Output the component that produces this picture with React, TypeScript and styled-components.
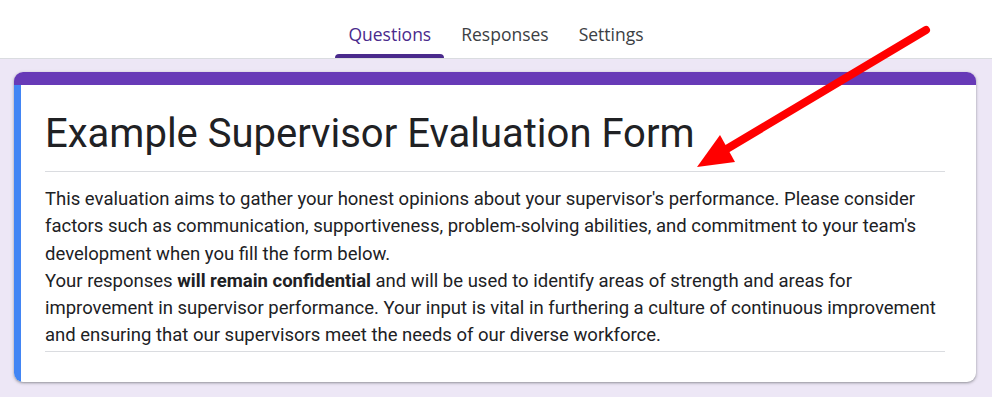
import styled, { createGlobalStyle } from 'styled-components';

const GlobalStyle = createGlobalStyle`
    html, body {
        margin: 0;
        padding: 0;
        background-color: #ede7f6;
        font-family: Roboto, "Liberation Sans", Arial, sans-serif;
    }
`;

const Page = styled.div`
    position: relative;
    width: 992px;
    height: 397px;
    overflow: hidden;
    background-color: #ede7f6;
`;

const Header = styled.div`
    height: 58px;
    background-color: #ffffff;
    border-bottom: 1px solid #dadce0;
    display: flex;
    justify-content: center;
`;

const Tab = styled.div<{ $active?: boolean }>`
    position: relative;
    display: flex;
    align-items: center;
    padding: 10px 13px 0;
    margin: 0 2px;
    font-family: "Open Sans", Roboto, sans-serif;
    font-size: 17.5px;
    font-weight: 500;
    color: ${props => (props.$active ? '#4a2a8c' : '#3c4043')};

    &::after {
        content: '';
        display: ${props => (props.$active ? 'block' : 'none')};
        position: absolute;
        left: 0;
        right: 0;
        bottom: 0;
        height: 4px;
        border-radius: 4px 4px 0 0;
        background-color: #4a2a8c;
    }
`;

const Main = styled.div`
    padding: 13px 16px 0 14px;
`;

const Card = styled.div`
    background-color: #ffffff;
    border-radius: 9px;
    overflow: hidden;
    box-shadow: 0 1px 2px rgba(60, 64, 67, 0.35), 0 1px 3px 1px rgba(60, 64, 67, 0.15);
`;

const TopBar = styled.div`
    height: 13px;
    background-color: #673ab7;
`;

const CardBody = styled.div`
    border-left: 7px solid #4285f4;
    padding: 23px 31px 30px 24px;
`;

const Title = styled.h1`
    margin: 0;
    font-family: Roboto, "Liberation Sans", sans-serif;
    font-size: 40px;
    font-weight: 400;
    line-height: 52px;
    color: #202124;
    padding-bottom: 11px;
    border-bottom: 1px solid #dadce0;
`;

const Description = styled.div`
    padding: 14px 0 1px;
    font-family: Roboto, "Liberation Sans", sans-serif;
    font-size: 18.5px;
    line-height: 27.3px;
    color: #202124;
    border-bottom: 1px solid #dadce0;

    b {
        font-weight: 700;
    }
`;

const ArrowLayer = styled.svg`
    position: absolute;
    left: 0;
    top: 0;
    pointer-events: none;
`;

export default function App() {
    return (
        <>
            <GlobalStyle />
            <Page>
                <Header>
                    <Tab $active>Questions</Tab>
                    <Tab>Responses</Tab>
                    <Tab>Settings</Tab>
                </Header>
                <Main>
                    <Card>
                        <TopBar />
                        <CardBody>
                            <Title>Example Supervisor Evaluation Form</Title>
                            <Description>
                                This evaluation aims to gather your honest opinions about your supervisor's performance. Please consider
                                factors such as communication, supportiveness, problem-solving abilities, and commitment to your team's
                                development when you fill the form below.
                                <br />
                                Your responses <b>will remain confidential</b> and will be used to identify areas of strength and areas for
                                improvement in supervisor performance. Your input is vital in furthering a culture of continuous improvement
                                and ensuring that our supervisors meet the needs of our diverse workforce.
                            </Description>
                        </CardBody>
                    </Card>
                </Main>
                {/* annotation arrow */}
                <ArrowLayer width="992" height="397" viewBox="0 0 992 397">
                    <line x1="926" y1="30" x2="725" y2="150" stroke="#ff0000" strokeWidth="8" strokeLinecap="round" />
                    <polygon points="697,167 720,135 735,162" fill="#ff0000" />
                </ArrowLayer>
            </Page>
        </>
    );
}
